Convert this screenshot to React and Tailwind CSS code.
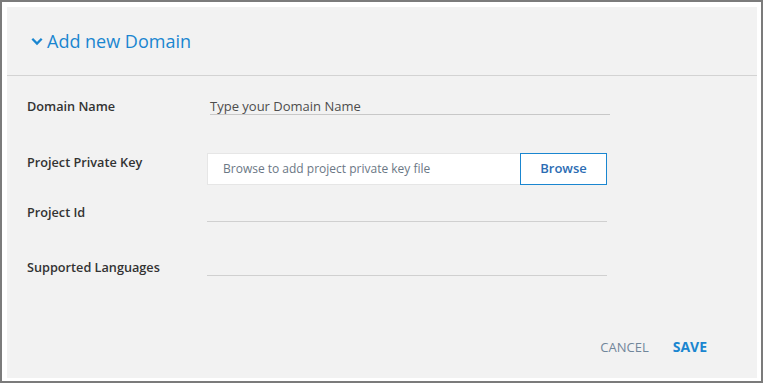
import React from "react";

const font = { fontFamily: "'Open Sans', 'Liberation Sans', sans-serif" };

function Label({ children }) {
  return (
    <div className="w-[180px] shrink-0 text-[12.7px] leading-[20px] font-semibold text-[#333]">
      {children}
    </div>
  );
}

export default function App() {
  return (
    <div
      style={font}
      className="w-[763px] h-[383px] border-2 border-[#7b7b7b] bg-white pl-[5px] pt-[5px] pr-[4px] pb-[3px]"
    >
      <div className="h-full bg-[#f2f2f2] flex flex-col">
        {/* header */}
        <div className="h-[69px] border-b border-[#d3d3d3] flex items-center pl-[24px]">
          <svg width="12" height="9" viewBox="0 0 12 9" className="mr-[4px] mt-[1px]">
            <path d="M1.3 1.8 L6 6.6 L10.7 1.8" fill="none" stroke="#1a86d0" strokeWidth="2.3" />
          </svg>
          <span className="text-[18px] text-[#1a86d0]">Add new Domain</span>
        </div>

        {/* form */}
        <div className="pl-[20px] flex flex-col">
          <div className="flex mt-[20px]">
            <Label>Domain Name</Label>
            <div className="w-[400px] h-[19px] border-b border-[#c8c8c8] ml-[3px] text-[13px] leading-[20px] text-[#4d4d4d]">
              Type your Domain Name
            </div>
          </div>

          <div className="flex mt-[36px]">
            <Label>Project Private Key</Label>
            <div className="flex mt-[1px] h-[32px]">
              <div className="w-[313px] bg-white border border-[#e6e6e6] border-r-0 flex items-center pl-[15px] text-[12px] text-[#6b7785]">
                Browse to add project private key file
              </div>
              <div className="w-[87px] border border-[#1a86d0] bg-white flex items-center justify-center text-[13px] font-semibold text-[#2b6cb3]">
                Browse
              </div>
            </div>
          </div>

          <div className="flex mt-[17px]">
            <Label>Project Id</Label>
            <div className="w-[400px] h-[20px] border-b border-[#d0d0d0]"></div>
          </div>

          <div className="flex mt-[35px]">
            <Label>Supported Languages</Label>
            <div className="w-[400px] h-[19px] border-b border-[#d0d0d0]"></div>
          </div>
        </div>

        {/* footer */}
        <div className="flex justify-end items-baseline mt-[60px] pr-[50px] gap-[24px] leading-[20px]">
          <span className="text-[13px] text-[#71869a]">CANCEL</span>
          <span className="text-[14px] font-bold text-[#1a86d0]">SAVE</span>
        </div>
      </div>
    </div>
  );
}
